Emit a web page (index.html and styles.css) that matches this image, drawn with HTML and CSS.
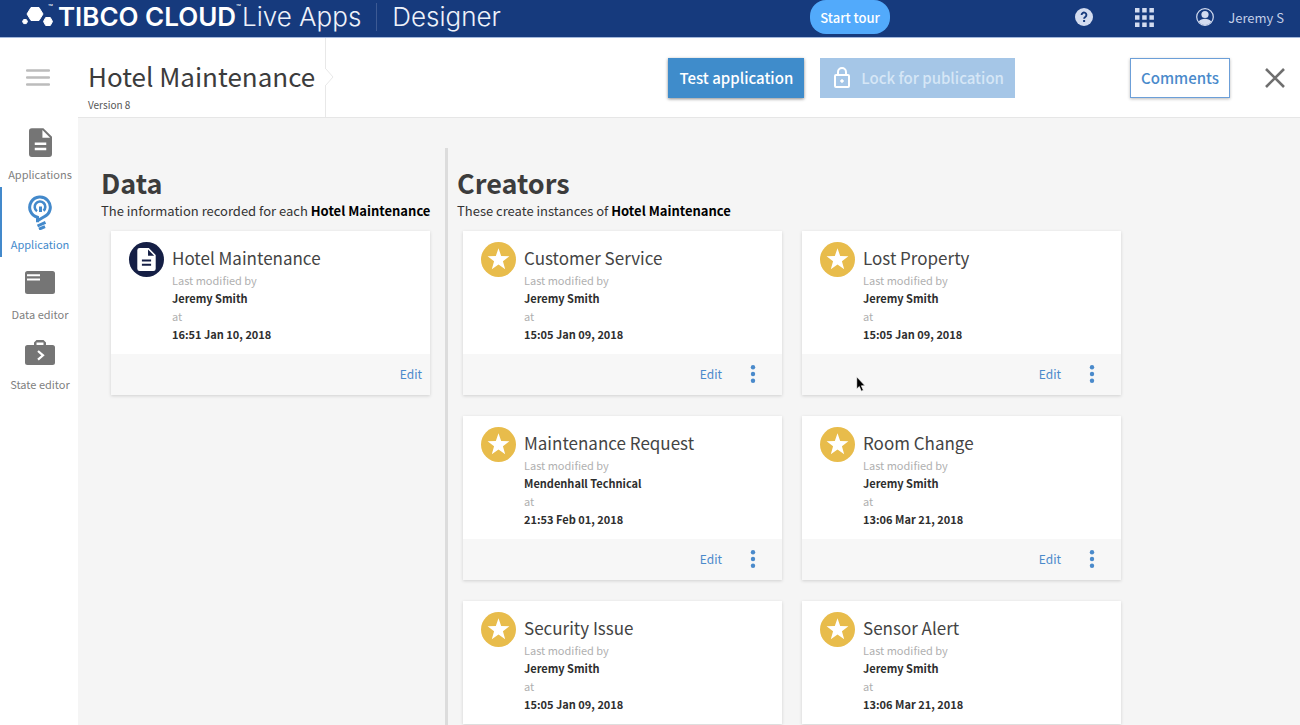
FILE: index.html
```html
<!DOCTYPE html>
<html lang="en">
<head>
<meta charset="utf-8">
<title>Hotel Maintenance - Designer</title>
<link rel="stylesheet" href="styles.css">
</head>
<body>
<svg class="defs" aria-hidden="true">
  <symbol id="doc" viewBox="0 0 24 30"><path fill-rule="evenodd" d="M3 0h12l9 9v18a3 3 0 0 1-3 3H3a3 3 0 0 1-3-3V3a3 3 0 0 1 3-3zM14 2v8h8zM6 15v2.500h12V15zM6 20.500V23h12v-2.500z"/></symbol>
  <symbol id="star" viewBox="0 0 34 34"><circle cx="17" cy="17" r="17" fill="#e8bc4b"/><path fill="#fff" d="M17 6l2.600 7.600 8 .2-6.300 4.900 2.200 7.700-6.500-4.500-6.500 4.500 2.200-7.700-6.300-4.900 8-.2z"/></symbol>
  <symbol id="dots" viewBox="0 0 6 18"><circle cx="3" cy="2.200" r="2.200"/><circle cx="3" cy="9" r="2.200"/><circle cx="3" cy="15.800" r="2.200"/></symbol>
</svg>
<div class="app">
  <header class="topbar">
    <div class="brand">
      <svg class="logo" viewBox="0 0 32 22" aria-hidden="true"><path fill="#fff" stroke="#fff" stroke-linejoin="round" d="M9 1.500h8l4 6.500-4 6.500H9L5 8zM23.700 11.500h4.600l2.200 4-2.200 4h-4.600l-2.200-4zM1.700 13.500h2.600l1.200 2-1.200 2.100H1.700l-1.200-2.100z"/></svg>
      <span class="tm tm-logo">™</span>
      <span class="brand-name">TIBCO CLOUD</span>
      <span class="tm">™</span>
      <span class="brand-product">Live Apps</span>
      <span class="brand-area">Designer</span>
    </div>
    <button class="tour" type="button">Start tour</button>
    <div class="tools">
      <button class="icon-btn" type="button" aria-label="Help"><svg width="18" height="18" viewBox="0 0 18 18"><circle cx="9" cy="9" r="9" fill="#d3dcf0"/><path d="M6.600 7a2.400 2.400 0 1 1 3.900 1.800c-.9.600-1.400 1-1.400 2" fill="none" stroke="#163a7d" stroke-width="1.900"/><rect x="8.100" y="12" width="2" height="2" fill="#163a7d"/></svg></button>
      <button class="icon-btn" type="button" aria-label="Apps"><svg width="19" height="19" viewBox="0 0 19 19" fill="#d3dcf0"><path d="M0 0h4.500v4.500H0zM7.200 0h4.500v4.500H7.200zM14.400 0h4.500v4.500h-4.500zM0 7.200h4.500v4.500H0zM7.200 7.200h4.500v4.500H7.200zM14.400 7.200h4.500v4.500h-4.500zM0 14.400h4.500v4.500H0zM7.200 14.400h4.500v4.500H7.200zM14.400 14.400h4.500v4.500h-4.500z"/></svg></button>
      <button class="user" type="button"><svg width="18" height="18" viewBox="0 0 18 18"><circle cx="9" cy="9" r="8.300" fill="none" stroke="#d3dcf0" stroke-width="1.200"/><circle cx="9" cy="6.500" r="3.600" fill="#d3dcf0"/><path d="M2.800 13.500c1.300-1.800 3.500-2.700 6.200-2.700s4.900.9 6.200 2.700A8 8 0 0 1 9 17a8 8 0 0 1-6.200-3.500z" fill="#d3dcf0"/></svg>Jeremy S</button>
    </div>
  </header>

  <nav class="side">
    <button class="menu" type="button" aria-label="Menu"><svg width="24" height="17" viewBox="0 0 24 17"><path d="M1 1.500h22M1 8.500h22M1 15.500h22" stroke="#bcbcbc" stroke-width="2.400" stroke-linecap="round"/></svg></button>
    <a class="nav-item" href="#"><span class="nav-icon"><svg width="23" height="29"><use href="#doc"/></svg></span>Applications</a>
    <a class="nav-item active" href="#"><span class="nav-icon"><svg width="24" height="35" viewBox="0 0 24 35" fill="none" stroke="#4389cb" stroke-width="3"><path d="M12.500 17V11.500"/><path d="M9 16.200A5.300 5.300 0 1 1 15.500 15.800" stroke-width="2.600"/><path d="M9.500 27.200V22.300A10.300 10.300 0 1 1 16 21.800L9.500 25.800"/><path d="M9.500 31l8-3.600M11 34.200l6-2.600"/></svg></span>Application</a>
    <a class="nav-item" href="#"><span class="nav-icon"><svg width="30" height="23" viewBox="0 0 30 23"><path fill-rule="evenodd" d="M2.500 0h25A2.500 2.500 0 0 1 30 2.500v18a2.500 2.500 0 0 1-2.500 2.500h-25A2.500 2.500 0 0 1 0 20.500v-18A2.500 2.500 0 0 1 2.500 0zM2 3.300v2h13v-2zM2 7.600v2h13v-2z"/></svg></span>Data editor</a>
    <a class="nav-item" href="#"><span class="nav-icon"><svg width="30" height="25" viewBox="0 0 30 25"><path fill-rule="evenodd" d="M11.500 0h7L21 2.500V5h6.500A2.500 2.500 0 0 1 30 7.500v15a2.500 2.500 0 0 1-2.500 2.500h-25A2.500 2.500 0 0 1 0 22.500v-15A2.500 2.500 0 0 1 2.500 5H9V2.500zM11.500 2.500V5h7V2.500z"/><path d="M13 11l5 4.300-5 4.300" fill="none" stroke="#fff" stroke-width="2.200"/></svg></span>State editor</a>
  </nav>

  <section class="head">
    <div class="title-block">
      <h1>Hotel Maintenance</h1>
      <p class="version">Version 8</p>
      <svg class="notch" viewBox="0 0 9 16" aria-hidden="true"><path d="M0 0h1l7 8-7 8H0z" fill="#fff"/><path d="M1 0l7 8-7 8" fill="none" stroke="#e8e8e8"/></svg>
    </div>
    <div class="actions">
      <button class="btn primary" type="button">Test application</button>
      <button class="btn locked" type="button"><svg width="16" height="21" viewBox="0 0 16 21" fill="none" stroke="#fff" stroke-width="2"><rect x="1" y="8" width="14" height="12" rx="1"/><path d="M4 8V5a4 4 0 0 1 8 0v3"/><circle cx="8" cy="14" r="1.300" fill="#fff" stroke-width="1"/></svg>Lock for publication</button>
      <button class="btn outline" type="button">Comments</button>
      <button class="close" type="button" aria-label="Close"><svg width="20" height="20" viewBox="0 0 20 20"><path d="M1 1l18 18M19 1L1 19" stroke="#6f6f6f" stroke-width="2.600"/></svg></button>
    </div>
  </section>

  <main class="content">
    <section class="col data">
      <h2>Data</h2>
      <p class="lead">The information recorded for each <b>Hotel Maintenance</b></p>
      <div class="cards">
        <article class="card">
          <div class="card-main"><span class="badge"><svg width="19" height="23"><use href="#doc"/></svg></span><div class="info"><h3>Hotel Maintenance</h3><p>Last modified by</p><p class="val">Jeremy Smith</p><p>at</p><p class="val">16:51 Jan 10, 2018</p></div></div>
          <footer class="card-foot"><a href="#">Edit</a></footer>
        </article>
      </div>
    </section>
    <section class="col creators">
      <h2>Creators</h2>
      <p class="lead">These create instances of <b>Hotel Maintenance</b></p>
      <div class="cards">
        <article class="card">
          <div class="card-main"><svg class="star"><use href="#star"/></svg><div class="info"><h3>Customer Service</h3><p>Last modified by</p><p class="val">Jeremy Smith</p><p>at</p><p class="val">15:05 Jan 09, 2018</p></div></div>
          <footer class="card-foot"><a href="#">Edit</a><button type="button" aria-label="More"><svg><use href="#dots"/></svg></button></footer>
        </article>
        <article class="card">
          <div class="card-main"><svg class="star"><use href="#star"/></svg><div class="info"><h3>Lost Property</h3><p>Last modified by</p><p class="val">Jeremy Smith</p><p>at</p><p class="val">15:05 Jan 09, 2018</p></div></div>
          <footer class="card-foot"><a href="#">Edit</a><button type="button" aria-label="More"><svg><use href="#dots"/></svg></button></footer>
          <svg class="pointer" viewBox="0 0 10 16" aria-hidden="true"><path d="M.7.800v12.200l2.600-2.500 2 4.700 2.100-.9-2-4.500h3.700z" fill="#000" stroke="#fff" stroke-width=".7"/></svg>
        </article>
        <article class="card">
          <div class="card-main"><svg class="star"><use href="#star"/></svg><div class="info"><h3>Maintenance Request</h3><p>Last modified by</p><p class="val">Mendenhall Technical</p><p>at</p><p class="val">21:53 Feb 01, 2018</p></div></div>
          <footer class="card-foot"><a href="#">Edit</a><button type="button" aria-label="More"><svg><use href="#dots"/></svg></button></footer>
        </article>
        <article class="card">
          <div class="card-main"><svg class="star"><use href="#star"/></svg><div class="info"><h3>Room Change</h3><p>Last modified by</p><p class="val">Jeremy Smith</p><p>at</p><p class="val">13:06 Mar 21, 2018</p></div></div>
          <footer class="card-foot"><a href="#">Edit</a><button type="button" aria-label="More"><svg><use href="#dots"/></svg></button></footer>
        </article>
        <article class="card">
          <div class="card-main"><svg class="star"><use href="#star"/></svg><div class="info"><h3>Security Issue</h3><p>Last modified by</p><p class="val">Jeremy Smith</p><p>at</p><p class="val">15:05 Jan 09, 2018</p></div></div>
        </article>
        <article class="card">
          <div class="card-main"><svg class="star"><use href="#star"/></svg><div class="info"><h3>Sensor Alert</h3><p>Last modified by</p><p class="val">Jeremy Smith</p><p>at</p><p class="val">13:06 Mar 21, 2018</p></div></div>
        </article>
      </div>
    </section>
  </main>
</div>
</body>
</html>
```

FILE: styles.css
```css
* { box-sizing: border-box; }
body, h1, h2, h3, p { margin: 0; }
body { font-family: "Noto Sans CJK SC", "Noto Sans", sans-serif; color: #3c3c3c; background: #fff; }
button { font: inherit; border: 0; padding: 0; background: none; cursor: pointer; }
a { color: inherit; text-decoration: none; }
svg { display: block; flex: none; }
.defs { position: absolute; width: 0; height: 0; }

.app {
  display: grid;
  grid-template: auto auto 1fr / 78px 1fr;
  height: 100vh;
  overflow: hidden;
}

/* Top bar */
.topbar {
  grid-column: 1 / -1;
  display: grid;
  grid-template-columns: 2fr auto 1fr;
  align-items: center;
  height: 38px;
  padding: 0 16px 3px 22px;
  background: #163a7d;
  border-bottom: 1px solid #a3b8dc;
  color: #d3dcf0;
}
.brand { display: flex; align-items: center; font-family: Inter, sans-serif; font-size: 26px; line-height: 34px; white-space: nowrap; color: #fff; }
.logo { width: 32px; height: 22px; }
.brand-name { font-weight: 600; margin-left: 5px; }
.brand-product { margin-left: 1px; font-weight: 300; color: #eef2fa; }
.brand-area { margin-left: 15px; padding-left: 15px; border-left: 1px solid #3d5a94; line-height: 28px; font-weight: 300; color: #eef2fa; }
.tm { align-self: flex-start; font-size: 8px; line-height: 14px; }
.tm-logo { margin-left: -6px; }
.tour { height: 34px; padding: 0 10px; border-radius: 16px; background: #52aafb; color: #fff; font-size: 13px; font-weight: 500; }
.tools { display: flex; align-items: center; justify-content: flex-end; gap: 42px; }
.user { display: flex; align-items: center; gap: 14px; font-size: 13px; color: #c3cfe8; }

/* Side navigation */
.side { grid-row: 2 / -1; display: flex; flex-direction: column; }
.menu { display: flex; justify-content: center; align-items: center; height: 79px; padding-right: 3px; }
.nav-item { display: flex; flex-direction: column; align-items: center; height: 70px; font-size: 11px; line-height: 14px; color: #808080; fill: #757575; border-left: 2px solid transparent; white-space: nowrap; }
.nav-icon { display: flex; align-items: center; height: 50px; }
.active { color: #4389cb; border-color: #4389cb; }

/* Page header */
.head { display: flex; height: 80px; border-bottom: 1px solid #e6e6e6; }
.title-block { position: relative; padding: 18px 10px 0; border-right: 1px solid #e8e8e8; }
h1 { font-size: 26px; line-height: 40px; font-weight: 400; white-space: nowrap; }
.version { font-size: 10px; line-height: 18px; color: #555; }
.notch { position: absolute; top: 31px; right: -9px; width: 9px; height: 16px; }
.actions { flex: 1; display: flex; align-items: center; justify-content: flex-end; padding-right: 15px; }
.btn { display: flex; flex: none; align-items: center; height: 40px; padding: 0 11px; font-size: 15px; font-weight: 500; white-space: nowrap; }
.primary { background: #3f8ccb; color: #fff; box-shadow: 0 1px 3px #8a8a8a; }
.locked { margin-left: 16px; gap: 11px; background: #a5c6e7; color: #d6e6f6; }
.locked svg { margin-left: 3px; }
.outline { margin-left: 115px; padding: 0 10px; border: 1px solid #6c9fd8; background: #fff; color: #4a8acb; box-shadow: 0 1px 3px #bbb; }
.close { margin-left: 35px; }

/* Columns */
.content { display: flex; min-height: 0; padding-top: 30px; background: #f5f5f5; overflow: hidden; }
.col { padding-top: 15px; }
.data { flex: none; width: 367px; padding-left: 23px; }
.creators { flex: 1; padding-left: 9px; border-left: 3px solid #dcdcdc; }
h2 { font-size: 27px; line-height: 40px; font-weight: 700; }
.lead { font-size: 13px; line-height: 16px; color: #333; white-space: nowrap; }
.lead b { color: #000; }
.cards { display: grid; grid-template-columns: repeat(auto-fill, 319px); gap: 21px 20px; padding-top: 12px; }
.data .cards { padding-left: 10px; }
.creators .cards { padding-left: 6px; }

.card { position: relative; background: #fff; box-shadow: 0 1px 3px #d0d0d0; }
.card-main { display: flex; gap: 8px; height: 123px; padding: 11px 18px 0; }
.star { width: 35px; height: 35px; }
.badge { display: flex; flex: none; align-items: center; justify-content: center; width: 35px; height: 35px; border-radius: 50%; background: #151f45; fill: #fff; }
.info { font-size: 11px; line-height: 18px; color: #b0b0b0; white-space: nowrap; }
h3 { padding-top: 2px; font-size: 17px; line-height: 27px; font-weight: 400; color: #444; }
.val { font-weight: 700; color: #2e2e2e; }
.card-foot { display: flex; align-items: center; justify-content: flex-end; gap: 28px; height: 41px; padding: 0 26px 2px 0; background: #f7f7f7; font-size: 12px; color: #4a8acb; }
.data .card-foot { padding-right: 8px; }
.card-foot button svg { width: 6px; height: 18px; fill: #4a8acb; }
.pointer { position: absolute; left: 54px; top: 145px; width: 10px; height: 16px; }
```
